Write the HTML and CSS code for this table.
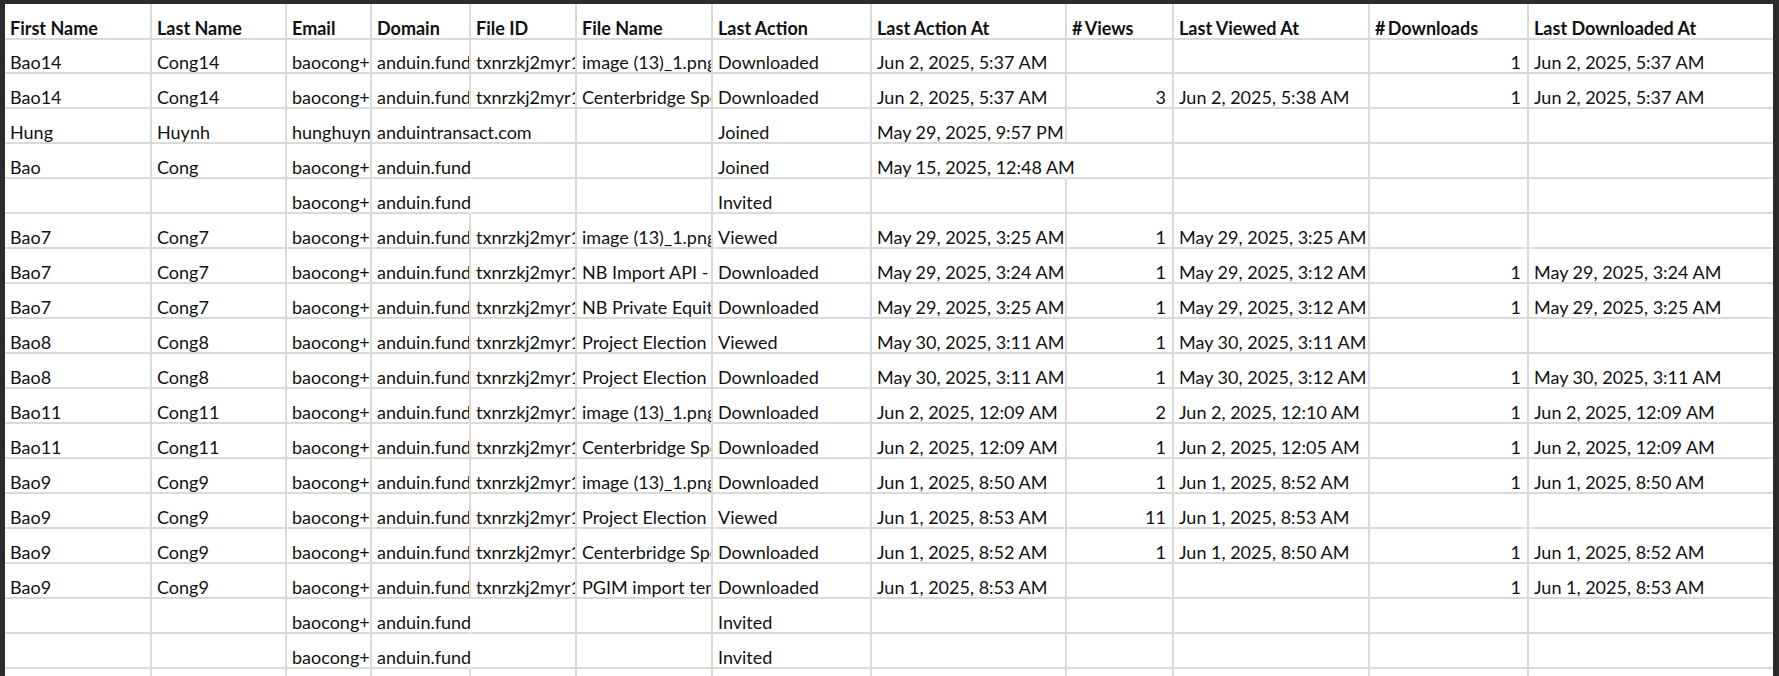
FILE: index.html
```html
<!DOCTYPE html>
<html>
<head>
<meta charset="utf-8">
<link rel="stylesheet" href="styles.css">
</head>
<body>
<div class="sheet">
  <div class="c h">First Name</div><div class="c h">Last Name</div><div class="c h">Email</div><div class="c h">Domain</div><div class="c h">File ID</div><div class="c h">File Name</div><div class="c h">Last Action</div><div class="c h">Last Action At</div><div class="c h">#&#8201;Views</div><div class="c h">Last Viewed At</div><div class="c h">#&#8201;Downloads</div><div class="c h last">Last Downloaded At</div>

  <div class="c">Bao14</div><div class="c">Cong14</div><div class="c">baocong+14@anduin.fund</div><div class="c">anduin.fund</div><div class="c">txnrzkj2myr1k4q7</div><div class="c">image (13)_1.png</div><div class="c">Downloaded</div><div class="c">Jun 2, 2025, 5:37 AM</div><div class="c n"></div><div class="c"></div><div class="c n">1</div><div class="c last">Jun 2, 2025, 5:37 AM</div>

  <div class="c">Bao14</div><div class="c">Cong14</div><div class="c">baocong+14@anduin.fund</div><div class="c">anduin.fund</div><div class="c">txnrzkj2myr1k4q7</div><div class="c">Centerbridge Special Credit.pdf</div><div class="c">Downloaded</div><div class="c">Jun 2, 2025, 5:37 AM</div><div class="c n">3</div><div class="c">Jun 2, 2025, 5:38 AM</div><div class="c n">1</div><div class="c last">Jun 2, 2025, 5:37 AM</div>

  <div class="c">Hung</div><div class="c">Huynh</div><div class="c">hunghuynh@anduintransact.com</div><div class="c sp">anduintransact.com</div><div class="c"></div><div class="c"></div><div class="c">Joined</div><div class="c">May 29, 2025, 9:57 PM</div><div class="c n"></div><div class="c"></div><div class="c n"></div><div class="c last"></div>

  <div class="c">Bao</div><div class="c">Cong</div><div class="c">baocong+1@anduin.fund</div><div class="c sp">anduin.fund</div><div class="c"></div><div class="c"></div><div class="c">Joined</div><div class="c sp">May 15, 2025, 12:48 AM</div><div class="c n"></div><div class="c"></div><div class="c n"></div><div class="c last"></div>

  <div class="c"></div><div class="c"></div><div class="c">baocong+2@anduin.fund</div><div class="c sp">anduin.fund</div><div class="c"></div><div class="c"></div><div class="c">Invited</div><div class="c"></div><div class="c n"></div><div class="c"></div><div class="c n"></div><div class="c last"></div>

  <div class="c">Bao7</div><div class="c">Cong7</div><div class="c">baocong+7@anduin.fund</div><div class="c">anduin.fund</div><div class="c">txnrzkj2myr1k4q7</div><div class="c">image (13)_1.png</div><div class="c">Viewed</div><div class="c">May 29, 2025, 3:25 AM</div><div class="c n">1</div><div class="c">May 29, 2025, 3:25 AM</div><div class="c n"></div><div class="c last"></div>

  <div class="c">Bao7</div><div class="c">Cong7</div><div class="c">baocong+7@anduin.fund</div><div class="c">anduin.fund</div><div class="c">txnrzkj2myr1k4q7</div><div class="c">NB Import API - Template.xlsx</div><div class="c">Downloaded</div><div class="c">May 29, 2025, 3:24 AM</div><div class="c n">1</div><div class="c">May 29, 2025, 3:12 AM</div><div class="c n">1</div><div class="c last">May 29, 2025, 3:24 AM</div>

  <div class="c">Bao7</div><div class="c">Cong7</div><div class="c">baocong+7@anduin.fund</div><div class="c">anduin.fund</div><div class="c">txnrzkj2myr1k4q7</div><div class="c">NB Private Equity Fund.pdf</div><div class="c">Downloaded</div><div class="c">May 29, 2025, 3:25 AM</div><div class="c n">1</div><div class="c">May 29, 2025, 3:12 AM</div><div class="c n">1</div><div class="c last">May 29, 2025, 3:25 AM</div>

  <div class="c">Bao8</div><div class="c">Cong8</div><div class="c">baocong+8@anduin.fund</div><div class="c">anduin.fund</div><div class="c">txnrzkj2myr1k4q7</div><div class="c">Project Election Form.pdf</div><div class="c">Viewed</div><div class="c">May 30, 2025, 3:11 AM</div><div class="c n">1</div><div class="c">May 30, 2025, 3:11 AM</div><div class="c n"></div><div class="c last"></div>

  <div class="c">Bao8</div><div class="c">Cong8</div><div class="c">baocong+8@anduin.fund</div><div class="c">anduin.fund</div><div class="c">txnrzkj2myr1k4q7</div><div class="c">Project Election Form.pdf</div><div class="c">Downloaded</div><div class="c">May 30, 2025, 3:11 AM</div><div class="c n">1</div><div class="c">May 30, 2025, 3:12 AM</div><div class="c n">1</div><div class="c last">May 30, 2025, 3:11 AM</div>

  <div class="c">Bao11</div><div class="c">Cong11</div><div class="c">baocong+11@anduin.fund</div><div class="c">anduin.fund</div><div class="c">txnrzkj2myr1k4q7</div><div class="c">image (13)_1.png</div><div class="c">Downloaded</div><div class="c">Jun 2, 2025, 12:09 AM</div><div class="c n">2</div><div class="c">Jun 2, 2025, 12:10 AM</div><div class="c n">1</div><div class="c last">Jun 2, 2025, 12:09 AM</div>

  <div class="c">Bao11</div><div class="c">Cong11</div><div class="c">baocong+11@anduin.fund</div><div class="c">anduin.fund</div><div class="c">txnrzkj2myr1k4q7</div><div class="c">Centerbridge Special Credit.pdf</div><div class="c">Downloaded</div><div class="c">Jun 2, 2025, 12:09 AM</div><div class="c n">1</div><div class="c">Jun 2, 2025, 12:05 AM</div><div class="c n">1</div><div class="c last">Jun 2, 2025, 12:09 AM</div>

  <div class="c">Bao9</div><div class="c">Cong9</div><div class="c">baocong+9@anduin.fund</div><div class="c">anduin.fund</div><div class="c">txnrzkj2myr1k4q7</div><div class="c">image (13)_1.png</div><div class="c">Downloaded</div><div class="c">Jun 1, 2025, 8:50 AM</div><div class="c n">1</div><div class="c">Jun 1, 2025, 8:52 AM</div><div class="c n">1</div><div class="c last">Jun 1, 2025, 8:50 AM</div>

  <div class="c">Bao9</div><div class="c">Cong9</div><div class="c">baocong+9@anduin.fund</div><div class="c">anduin.fund</div><div class="c">txnrzkj2myr1k4q7</div><div class="c">Project Election Form.pdf</div><div class="c">Viewed</div><div class="c">Jun 1, 2025, 8:53 AM</div><div class="c n">11</div><div class="c">Jun 1, 2025, 8:53 AM</div><div class="c n"></div><div class="c last"></div>

  <div class="c">Bao9</div><div class="c">Cong9</div><div class="c">baocong+9@anduin.fund</div><div class="c">anduin.fund</div><div class="c">txnrzkj2myr1k4q7</div><div class="c">Centerbridge Special Credit.pdf</div><div class="c">Downloaded</div><div class="c">Jun 1, 2025, 8:52 AM</div><div class="c n">1</div><div class="c">Jun 1, 2025, 8:50 AM</div><div class="c n">1</div><div class="c last">Jun 1, 2025, 8:52 AM</div>

  <div class="c">Bao9</div><div class="c">Cong9</div><div class="c">baocong+9@anduin.fund</div><div class="c">anduin.fund</div><div class="c">txnrzkj2myr1k4q7</div><div class="c">PGIM import template.xlsx</div><div class="c">Downloaded</div><div class="c">Jun 1, 2025, 8:53 AM</div><div class="c n"></div><div class="c"></div><div class="c n">1</div><div class="c last">Jun 1, 2025, 8:53 AM</div>

  <div class="c"></div><div class="c"></div><div class="c">baocong+3@anduin.fund</div><div class="c sp">anduin.fund</div><div class="c"></div><div class="c"></div><div class="c">Invited</div><div class="c"></div><div class="c n"></div><div class="c"></div><div class="c n"></div><div class="c last"></div>

  <div class="c"></div><div class="c"></div><div class="c">baocong+4@anduin.fund</div><div class="c sp">anduin.fund</div><div class="c"></div><div class="c"></div><div class="c">Invited</div><div class="c"></div><div class="c n"></div><div class="c"></div><div class="c n"></div><div class="c last"></div>

  <div class="c"></div><div class="c"></div><div class="c"></div><div class="c"></div><div class="c"></div><div class="c"></div><div class="c"></div><div class="c"></div><div class="c"></div><div class="c"></div><div class="c"></div><div class="c last"></div>
</div>
</body>
</html>
```

FILE: styles.css
```css
html, body {
  margin: 0;
  padding: 0;
  height: 676px;
  overflow: hidden;
  background: #2b2b2b;
}

.sheet {
  margin: 4px 6px 0 5px;
  background: #ffffff;
  display: grid;
  grid-template-columns: 147px 135px 85px 99px 106px 136px 159px 195px 107px 196px 159px 244px;
  grid-auto-rows: 35px;
  font-family: "Lato", "Carlito", "Liberation Sans", sans-serif;
  font-size: 18px;
  color: #111111;
}

.c {
  box-sizing: border-box;
  display: flex;
  align-items: flex-end;
  padding: 0 6px 2px 5px;
  white-space: nowrap;
  overflow-x: clip;
  overflow-y: visible;
  border-right: 2px solid #dadada;
  border-bottom: 2px solid #dadada;
  line-height: 16px;
}

.h {
  font-weight: 700;
  height: 36px;
}

.n {
  justify-content: flex-end;
}

.sp {
  overflow-x: visible;
  border-right-color: transparent;
}

.last {
  border-right: none;
}
```
